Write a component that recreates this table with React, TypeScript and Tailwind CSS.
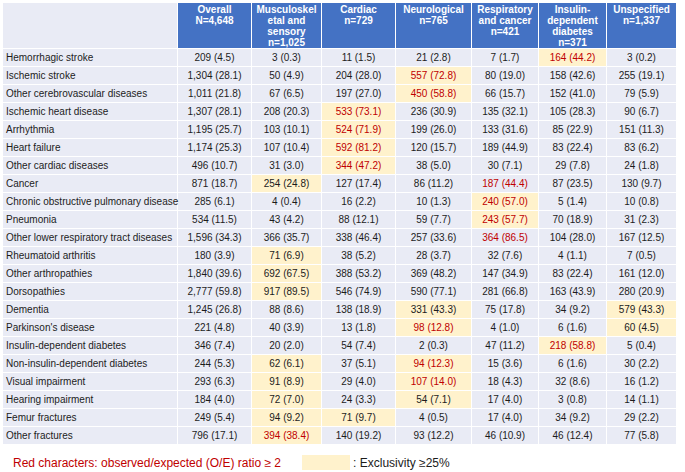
import React from 'react';

type Cell = { v: string; y?: boolean; r?: boolean };

const headers = [
  ['Overall', 'N=4,648'],
  ['Musculoskel', 'etal and', 'sensory', 'n=1,025'],
  ['Cardiac', 'n=729'],
  ['Neurological', 'n=765'],
  ['Respiratory', 'and cancer', 'n=421'],
  ['Insulin-', 'dependent', 'diabetes', 'n=371'],
  ['Unspecified', 'n=1,337'],
];

// y = exclusivity >= 25% (yellow), r = O/E ratio >= 2 (red)
const rows: [string, Cell[]][] = [
  ['Hemorrhagic stroke', [{ v: '209 (4.5)' }, { v: '3 (0.3)' }, { v: '11 (1.5)' }, { v: '21 (2.8)' }, { v: '7 (1.7)' }, { v: '164 (44.2)', y: true, r: true }, { v: '3 (0.2)' }]],
  ['Ischemic stroke', [{ v: '1,304 (28.1)' }, { v: '50 (4.9)' }, { v: '204 (28.0)' }, { v: '557 (72.8)', y: true, r: true }, { v: '80 (19.0)' }, { v: '158 (42.6)' }, { v: '255 (19.1)' }]],
  ['Other cerebrovascular diseases', [{ v: '1,011 (21.8)' }, { v: '67 (6.5)' }, { v: '197 (27.0)' }, { v: '450 (58.8)', y: true, r: true }, { v: '66 (15.7)' }, { v: '152 (41.0)' }, { v: '79 (5.9)' }]],
  ['Ischemic heart disease', [{ v: '1,307 (28.1)' }, { v: '208 (20.3)' }, { v: '533 (73.1)', y: true, r: true }, { v: '236 (30.9)' }, { v: '135 (32.1)' }, { v: '105 (28.3)' }, { v: '90 (6.7)' }]],
  ['Arrhythmia', [{ v: '1,195 (25.7)' }, { v: '103 (10.1)' }, { v: '524 (71.9)', y: true, r: true }, { v: '199 (26.0)' }, { v: '133 (31.6)' }, { v: '85 (22.9)' }, { v: '151 (11.3)' }]],
  ['Heart failure', [{ v: '1,174 (25.3)' }, { v: '107 (10.4)' }, { v: '592 (81.2)', y: true, r: true }, { v: '120 (15.7)' }, { v: '189 (44.9)' }, { v: '83 (22.4)' }, { v: '83 (6.2)' }]],
  ['Other cardiac diseases', [{ v: '496 (10.7)' }, { v: '31 (3.0)' }, { v: '344 (47.2)', y: true, r: true }, { v: '38 (5.0)' }, { v: '30 (7.1)' }, { v: '29 (7.8)' }, { v: '24 (1.8)' }]],
  ['Cancer', [{ v: '871 (18.7)' }, { v: '254 (24.8)', y: true }, { v: '127 (17.4)' }, { v: '86 (11.2)' }, { v: '187 (44.4)', r: true }, { v: '87 (23.5)' }, { v: '130 (9.7)' }]],
  ['Chronic obstructive pulmonary disease', [{ v: '285 (6.1)' }, { v: '4 (0.4)' }, { v: '16 (2.2)' }, { v: '10 (1.3)' }, { v: '240 (57.0)', y: true, r: true }, { v: '5 (1.4)' }, { v: '10 (0.8)' }]],
  ['Pneumonia', [{ v: '534 (11.5)' }, { v: '43 (4.2)' }, { v: '88 (12.1)' }, { v: '59 (7.7)' }, { v: '243 (57.7)', y: true, r: true }, { v: '70 (18.9)' }, { v: '31 (2.3)' }]],
  ['Other lower respiratory tract diseases', [{ v: '1,596 (34.3)' }, { v: '366 (35.7)' }, { v: '338 (46.4)' }, { v: '257 (33.6)' }, { v: '364 (86.5)', r: true }, { v: '104 (28.0)' }, { v: '167 (12.5)' }]],
  ['Rheumatoid arthritis', [{ v: '180 (3.9)' }, { v: '71 (6.9)', y: true }, { v: '38 (5.2)' }, { v: '28 (3.7)' }, { v: '32 (7.6)' }, { v: '4 (1.1)' }, { v: '7 (0.5)' }]],
  ['Other arthropathies', [{ v: '1,840 (39.6)' }, { v: '692 (67.5)', y: true }, { v: '388 (53.2)' }, { v: '369 (48.2)' }, { v: '147 (34.9)' }, { v: '83 (22.4)' }, { v: '161 (12.0)' }]],
  ['Dorsopathies', [{ v: '2,777 (59.8)' }, { v: '917 (89.5)', y: true }, { v: '546 (74.9)' }, { v: '590 (77.1)' }, { v: '281 (66.8)' }, { v: '163 (43.9)' }, { v: '280 (20.9)' }]],
  ['Dementia', [{ v: '1,245 (26.8)' }, { v: '88 (8.6)' }, { v: '138 (18.9)' }, { v: '331 (43.3)', y: true }, { v: '75 (17.8)' }, { v: '34 (9.2)' }, { v: '579 (43.3)', y: true }]],
  ["Parkinson's disease", [{ v: '221 (4.8)' }, { v: '40 (3.9)' }, { v: '13 (1.8)' }, { v: '98 (12.8)', y: true, r: true }, { v: '4 (1.0)' }, { v: '6 (1.6)' }, { v: '60 (4.5)', y: true }]],
  ['Insulin-dependent diabetes', [{ v: '346 (7.4)' }, { v: '20 (2.0)' }, { v: '54 (7.4)' }, { v: '2 (0.3)' }, { v: '47 (11.2)' }, { v: '218 (58.8)', y: true, r: true }, { v: '5 (0.4)' }]],
  ['Non-insulin-dependent diabetes', [{ v: '244 (5.3)' }, { v: '62 (6.1)', y: true }, { v: '37 (5.1)' }, { v: '94 (12.3)', y: true, r: true }, { v: '15 (3.6)' }, { v: '6 (1.6)' }, { v: '30 (2.2)' }]],
  ['Visual impairment', [{ v: '293 (6.3)' }, { v: '91 (8.9)', y: true }, { v: '29 (4.0)' }, { v: '107 (14.0)', y: true, r: true }, { v: '18 (4.3)' }, { v: '32 (8.6)' }, { v: '16 (1.2)' }]],
  ['Hearing impairment', [{ v: '184 (4.0)' }, { v: '72 (7.0)', y: true }, { v: '24 (3.3)' }, { v: '54 (7.1)', y: true }, { v: '17 (4.0)' }, { v: '3 (0.8)' }, { v: '14 (1.1)' }]],
  ['Femur fractures', [{ v: '249 (5.4)' }, { v: '94 (9.2)', y: true }, { v: '71 (9.7)', y: true }, { v: '4 (0.5)' }, { v: '17 (4.0)' }, { v: '34 (9.2)' }, { v: '29 (2.2)' }]],
  ['Other fractures', [{ v: '796 (17.1)' }, { v: '394 (38.4)', y: true, r: true }, { v: '140 (19.2)' }, { v: '93 (12.2)' }, { v: '46 (10.9)' }, { v: '46 (12.4)' }, { v: '77 (5.8)' }]],
];

export default function App() {
  return (
    <div className="w-[685px] h-[472px] bg-white overflow-hidden font-['Liberation_Sans',Arial,sans-serif] text-[#1c1c1c]">
      <table className="ml-[2px] mt-[2px] w-[675px] table-fixed border-separate border-spacing-[1px] text-[10px]">
        <colgroup>
          <col className="w-[174px]" />
          <col className="w-[73px]" />
          <col className="w-[69px]" />
          <col className="w-[73px]" />
          <col className="w-[75px]" />
          <col className="w-[66px]" />
          <col className="w-[67px]" />
          <col className="w-[69px]" />
        </colgroup>
        <thead>
          <tr>
            <th className="h-[45px] bg-[#e9ebf5] p-0"></th>
            {headers.map((lines, i) => (
              <th
                key={i}
                className="h-[45px] bg-[#4472c4] p-0 pt-[1px] align-top text-center text-[10px] font-bold text-white leading-[11px]"
              >
                {lines.map((l, j) => (
                  <div key={j}>{l}</div>
                ))}
              </th>
            ))}
          </tr>
        </thead>
        <tbody>
          {rows.map(([label, cells]) => (
            <tr key={label}>
              <td className="h-[17px] bg-[#e9ebf5] p-0 pl-[3px] leading-[17px] whitespace-nowrap">{label}</td>
              {cells.map((c, i) => (
                <td
                  key={i}
                  className={`h-[17px] p-0 text-center leading-[17px] whitespace-nowrap ${
                    c.y ? 'bg-[#fff2cc]' : 'bg-[#e9ebf5]'
                  } ${c.r ? 'text-[#c00000]' : ''}`}
                >
                  {c.v}
                </td>
              ))}
            </tr>
          ))}
        </tbody>
      </table>

      {/* legend */}
      <div className="mt-[10px] flex items-center text-[12px] leading-[14px]">
        <span className="ml-[13px] text-[#c00000]">Red characters: observed/expected (O/E) ratio ≥ 2</span>
        <span className="ml-[21px] h-[15px] w-[48px] bg-[#fff2cc]" />
        <span className="ml-[3px]">: Exclusivity ≥25%</span>
      </div>
    </div>
  );
}
